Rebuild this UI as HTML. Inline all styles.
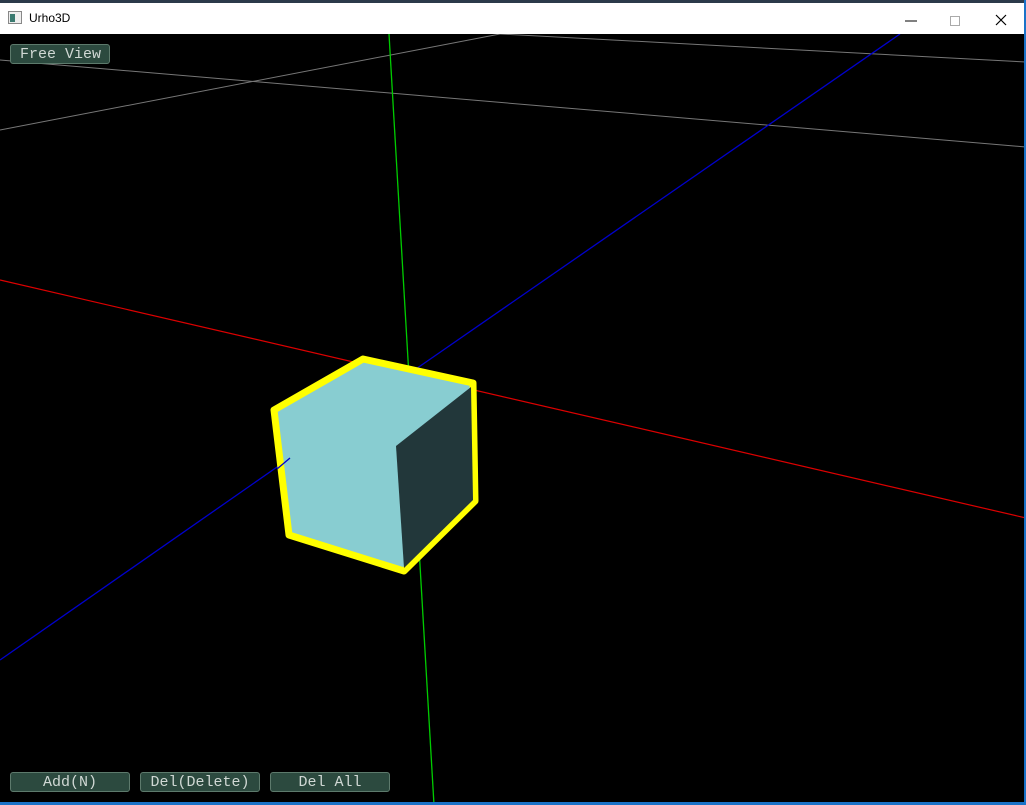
<!DOCTYPE html>
<html><head><style>
html,body{margin:0;padding:0;width:1026px;height:805px;overflow:hidden;background:#000;font-family:"Liberation Sans",sans-serif}
.tb{position:absolute;left:0;top:0;width:1026px;height:3px;background:#2b3a4a}
.title{position:absolute;left:0;top:3px;width:1024px;height:31px;background:#fff}
.title span{position:absolute;left:29px;top:8px;font-size:12px;color:#000}
.btn{position:absolute;height:18px;background:#2c4a3f;border:1px solid #5d7a6c;border-radius:3px;color:#d0d8d4;font-family:"Liberation Mono",monospace;font-size:15px;line-height:19px;text-align:center}
</style></head><body>
<div class="tb"></div>
<div class="title">
<svg style="position:absolute;left:8px;top:8px" width="14" height="13"><rect x="0.5" y="0.5" width="13" height="12" fill="#eee" stroke="#888"/><rect x="2" y="3" width="5" height="8" fill="#3a7a70"/></svg>
<span>Urho3D</span>
<svg style="position:absolute;left:900px;top:6px" width="124" height="22">
<line x1="5" y1="12" x2="17" y2="12" stroke="#000"/>
<rect x="50.5" y="7.5" width="9" height="9" fill="none" stroke="#aaa"/>
<path d="M96 6L106 16M106 6L96 16" stroke="#000" stroke-width="1.2"/>
</svg>
</div>
<svg style="position:absolute;left:0;top:34px" width="1026" height="771" viewBox="0 34 1026 771">
<line x1="0" y1="130" x2="500" y2="34" stroke="#777" stroke-width="1"/>
<line x1="0" y1="60" x2="1026" y2="147" stroke="#777" stroke-width="1"/>
<line x1="500" y1="34" x2="1026" y2="62" stroke="#777" stroke-width="1"/>
<line x1="389" y1="34" x2="434" y2="805" stroke="#0c0" stroke-width="1.3"/>
<line x1="0" y1="280" x2="1026" y2="518" stroke="#d00" stroke-width="1.2"/>
<line x1="0" y1="660" x2="290" y2="458" stroke="#00c" stroke-width="1.3"/>
<line x1="413" y1="371" x2="900" y2="34" stroke="#00c" stroke-width="1.3"/>
<polygon points="274,410 363,359 473,383 475,501 404,571 289,535" fill="#88cdd1" stroke="#ff0" stroke-width="7" stroke-linejoin="round"/>
<line x1="277" y1="469" x2="290" y2="458" stroke="#00c" stroke-width="1.3"/>
<polygon points="396,446 471,387 473,500 404,568" fill="#22373a"/>
</svg>
<div class="btn" style="left:10px;top:44px;width:98px;text-align:left">&nbsp;Free View</div>
<div class="btn" style="left:10px;top:772px;width:118px">Add(N)</div>
<div class="btn" style="left:140px;top:772px;width:118px">Del(Delete)</div>
<div class="btn" style="left:270px;top:772px;width:118px">Del All</div>
<div style="position:absolute;left:1024px;top:0;width:2px;height:805px;background:#1a73c8"></div>
<div style="position:absolute;left:0;top:802px;width:1026px;height:3px;background:#1a73c8"></div>
</body></html>
